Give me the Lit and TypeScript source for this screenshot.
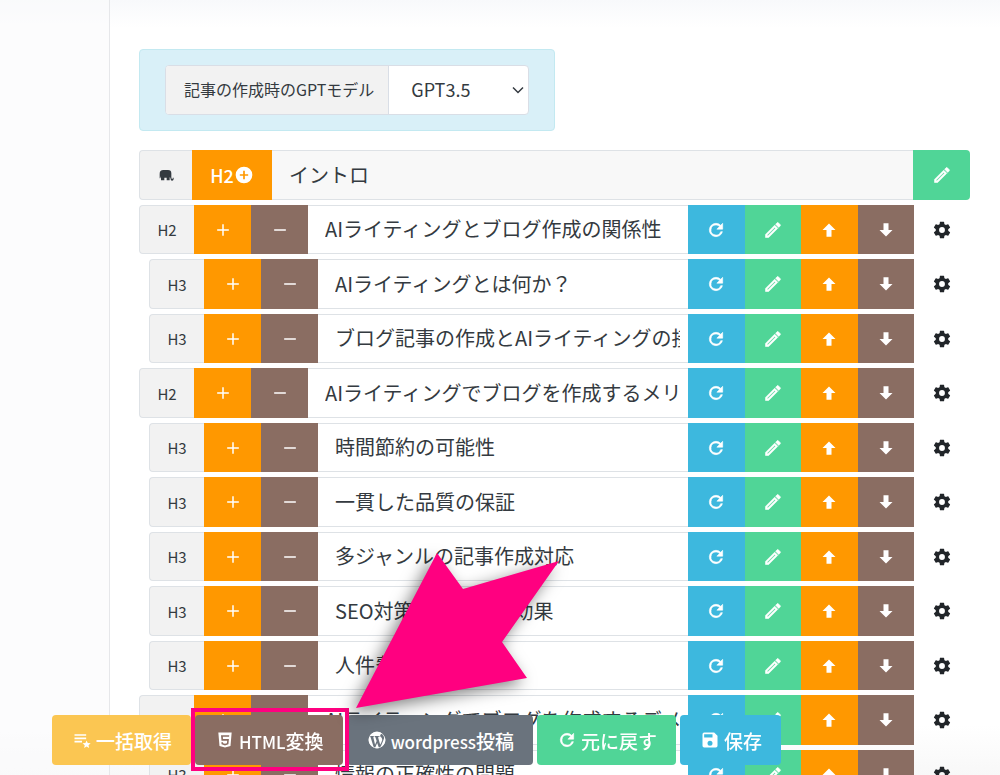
import { LitElement, html, css, svg, nothing } from "lit";
import { customElement, property } from "lit/decorators.js";

const icons: Record<string, unknown> = {
  elephant: svg`<path d="M19 19 Q19 15.5 17.5 15.5 L17.5 20 H13 V16 H9.5 V20 H4.5 V14 L3.5 17 H2.5 V10 Q2.5 4.5 8 4.5 H15 Q20 4.5 20 9.5 V15 Q20 18 21.2 18 Q22.2 18 22.2 16 H23.5 Q23.8 20.5 21 20.5 Q19 20.5 19 18 Z" />`,
  plus: svg`<path d="M19 12.9H12.9V19H11.1V12.9H5V11.1H11.1V5H12.9V11.1H19Z" />`,
  minus: svg`<path d="M5 11.1H19V12.9H5Z" />`,
  plusCircle: svg`<path fill-rule="evenodd" d="M12 2a10 10 0 1 0 0 20a10 10 0 1 0 0-20ZM17 13H13V17H11V13H7V11H11V7H13V11H17Z" />`,
  pencil: svg`<path stroke="currentColor" stroke-width="0.7" d="M14.06 9.02l.92.92L5.92 19H5v-.92l9.06-9.06M17.66 3c-.25 0-.51.1-.7.29l-1.83 1.83 3.75 3.75 1.83-1.83c.39-.39.39-1.04 0-1.41l-2.34-2.34c-.2-.2-.45-.29-.71-.29M14.06 6.19L3 17.25V21h3.75L17.81 9.94l-3.75-3.75z" />`,
  refresh: svg`<path stroke="currentColor" stroke-width="0.7" d="M17.65 6.35A7.95 7.95 0 0 0 12 4a8 8 0 1 0 7.73 10h-2.08A6 6 0 1 1 12 6c1.66 0 3.14.69 4.22 1.78L13 11h7V4z" />`,
  up: svg`<path d="M15 20H9V12H4.2L12 4.2 19.8 12H15Z" />`,
  down: svg`<path d="M9 4H15V12H19.8L12 19.8 4.2 12H9Z" />`,
  gear: svg`<path d="M12 15.5A3.5 3.5 0 0 1 8.5 12 3.5 3.5 0 0 1 12 8.5a3.5 3.5 0 0 1 3.5 3.5 3.5 3.5 0 0 1-3.5 3.5m7.43-2.53c.04-.32.07-.64.07-.97s-.03-.66-.07-1l2.11-1.63c.19-.15.24-.42.12-.64l-2-3.46c-.12-.22-.39-.31-.61-.22l-2.49 1c-.52-.39-1.06-.73-1.69-.98l-.37-2.65A.506.506 0 0 0 14 2h-4c-.25 0-.46.18-.5.42l-.37 2.65c-.63.25-1.17.59-1.69.98l-2.49-1c-.22-.09-.49 0-.61.22l-2 3.46c-.13.22-.07.49.12.64L4.57 11c-.04.34-.07.67-.07 1s.03.65.07.97l-2.11 1.66c-.19.15-.25.42-.12.64l2 3.46c.12.22.39.3.61.22l2.49-1.01c.52.4 1.06.74 1.69.99l.37 2.65c.04.24.25.42.5.42h4c.25 0 .46-.18.5-.42l.37-2.65c.63-.26 1.17-.59 1.69-.99l2.49 1.01c.22.08.49 0 .61-.22l2-3.46c.12-.22.07-.49-.12-.64z" />`,
  listStar: svg`<path d="M3 5H17V7H3ZM3 9H17V11H3ZM3 13H12V15H3ZM17.5 12.5l1.4 3.2 3.5.3-2.6 2.3.8 3.4-3.1-1.8-3 1.8.8-3.4-2.7-2.3 3.5-.3Z" />`,
  html5: svg`<path fill-rule="evenodd" d="M4 3H20L18.6 19.2 12 21 5.4 19.2ZM7.2 6.2L7.8 12.8H14.6L14.3 15.8 12 16.5 9.7 15.8 9.6 14.6H7.6L7.9 17.2 12 18.6 16.1 17.2 16.7 10.9H9.6L9.4 8.2H16.9L17.1 6.2Z" />`,
  save: svg`<path fill-rule="evenodd" d="M17 3H5a2 2 0 0 0-2 2v14a2 2 0 0 0 2 2h14a2 2 0 0 0 2-2V7ZM12 19a3 3 0 1 1 0-6a3 3 0 0 1 0 6ZM15 9H5V5h10Z" />`,
  wordpress: svg`<path d="M12.2 15.5L9.65 21.72C10.4 21.9 11.19 22 12 22 12.84 22 13.66 21.9 14.44 21.7L12.2 15.5M20.61 7.06C20.8 7.96 20.76 9.05 20.39 10.25 19.42 13.37 17 19 16.1 21.13 19.58 19.58 22 16.12 22 12.1 22 10.26 21.5 8.53 20.61 7.06M4.31 8.64C4.31 8.64 3.82 8 3.31 8H2.78C2.28 9.13 2 10.62 2 12 2 16.09 4.5 19.61 8.12 21.11L4.31 8.64M3.13 7.14C4.8 4.03 8.14 2 12 2 14.5 2 16.78 3.06 18.53 4.56 18.03 4.46 17.5 4.57 16.93 4.89 15.64 5.63 15.22 7.71 16.89 8.76 17.94 9.41 18.31 11.04 18.27 12.04 18.24 13.03 15.85 17.61 15.85 17.61L13.5 9.63C13.5 9.63 13.44 9.07 13.44 8.91 13.44 8.71 13.5 8.46 13.63 8.31 13.72 8.22 13.85 8 14 8H15.11V7.14H9.11V8H9.3C9.5 8 9.69 8.29 9.87 8.47 10.09 8.7 10.37 9.55 10.7 10.43L11.57 13.3 9.69 17.63 7.63 8.97C7.63 8.97 7.69 8.37 7.82 8.27 7.9 8.2 8 8 8.17 8H8.22V7.14H3.13Z" /><circle cx="12" cy="12" r="9.6" fill="none" stroke="currentColor" stroke-width="0.8" />`,
};

const icon = (name: string, size = 20, cls = "") => html`
  <svg class=${cls} viewBox="0 0 24 24" width=${size} height=${size} fill="currentColor" aria-hidden="true">${icons[name]}</svg>
`;

const shared = css`
  * {
    box-sizing: border-box;
  }
  button,
  input,
  select {
    font: inherit;
    color: inherit;
    margin: 0;
    border: 0;
    border-radius: 0;
    padding: 0;
    outline: 0;
  }
  button {
    display: flex;
    align-items: center;
    justify-content: center;
    cursor: pointer;
    color: #fff;
  }
  svg {
    display: block;
    flex: none;
  }
  .orange {
    background: #ff9800;
  }
  .brown {
    background: #8a6d62;
  }
  .blue {
    background: #3db8de;
  }
  .green {
    background: #50d597;
  }
  .yellow {
    background: #fbc652;
  }
  .grey {
    background: #6a737d;
  }
`;

@customElement("heading-row")
class HeadingRow extends LitElement {
  @property() level = "H2";
  @property() text = "";

  static styles = [
    shared,
    css`
      :host {
        display: block;
      }
      .row {
        display: flex;
        height: 100%;
      }
      .h3 {
        padding-left: 10px;
      }
      .tag {
        width: 55px;
        display: flex;
        align-items: center;
        justify-content: center;
        font-size: 15px;
        background: #f2f2f2;
        border: 1px solid #dee2e6;
        border-right: 0;
        border-radius: 4px 0 0 4px;
      }
      .action {
        width: 57px;
      }
      .title {
        flex: 1;
        min-width: 0;
        background: #fff;
        border: solid #dee2e6;
        border-width: 1px 0;
        padding: 0 8px 2px 17px;
        font-size: 20px;
      }
      .tools {
        display: grid;
        grid-template-columns: 1fr 1fr 1fr 1fr;
        width: 226px;
      }
      .gear {
        width: 56px;
        background: none;
        color: #212529;
      }
    `,
  ];

  render() {
    return html`
      <div class="row ${this.level.toLowerCase()}">
        <label class="tag" for="title">${this.level}</label>
        <button class="action orange" aria-label="追加">${icon("plus")}</button>
        <button class="action brown" aria-label="削除">${icon("minus")}</button>
        <input id="title" class="title" .value=${this.text} />
        <div class="tools">
          <button class="blue" aria-label="再生成">${icon("refresh")}</button>
          <button class="green" aria-label="編集">${icon("pencil")}</button>
          <button class="orange" aria-label="上へ">${icon("up")}</button>
          <button class="brown" aria-label="下へ">${icon("down")}</button>
        </div>
        <button class="gear" aria-label="設定">${icon("gear")}</button>
      </div>
    `;
  }
}

const rows = [
  ["H2", "AIライティングとブログ作成の関係性"],
  ["H3", "AIライティングとは何か？"],
  ["H3", "ブログ記事の作成とAIライティングの接点"],
  ["H2", "AIライティングでブログを作成するメリット"],
  ["H3", "時間節約の可能性"],
  ["H3", "一貫した品質の保証"],
  ["H3", "多ジャンルの記事作成対応"],
  ["H3", "SEO対策に貢献する効果"],
  ["H3", "人件費の削減"],
  ["H2", "AIライティングでブログを作成するデメリット"],
  ["H3", "情報の正確性の問題"],
];

const actions = [
  { latin: "", label: "一括取得", icon: "listStar", tone: "yellow" },
  { latin: "HTML", label: "変換", icon: "html5", tone: "brown", marked: true },
  { latin: "wordpress", label: "投稿", icon: "wordpress", tone: "grey" },
  { latin: "", label: "元に戻す", icon: "refresh", tone: "green" },
  { latin: "", label: "保存", icon: "save", tone: "blue" },
];

@customElement("app-root")
class AppRoot extends LitElement {
  static styles = [
    shared,
    css`
      :host {
        display: grid;
        grid-template-columns: 110px 1fr;
        height: 100vh;
        overflow: hidden;
        font-family: "Noto Sans CJK JP", sans-serif;
        color: #343a40;
        background: linear-gradient(#f8f9fb, #fff 28px, #fff calc(100% - 50px), #f8f8f8);
      }
      .side {
        border-right: 1px solid #e6e7ea;
        background: rgb(250 250 251 / 60%);
      }
      .main {
        min-width: 0;
        padding: 49px 30px 0 29px;
      }
      .panel {
        width: 416px;
        padding: 15px 25px;
        background: #d9f0f8;
        border: 1px solid #c3e9f1;
        border-radius: 4px;
      }
      .model {
        display: flex;
        height: 50px;
        border: 1px solid #d9dee6;
        border-radius: 4px;
        background: #fff;
        overflow: hidden;
      }
      .model-label {
        display: flex;
        align-items: center;
        padding: 0 14px 2px 18px;
        font-size: 16px;
        background: #f2f2f2;
        border-right: 1px solid #d9dee6;
        white-space: nowrap;
      }
      .select-wrap {
        flex: 1;
        display: grid;
        align-items: center;
      }
      .select-wrap > * {
        grid-area: 1 / 1;
      }
      .select {
        appearance: none;
        height: 100%;
        padding: 0 30px 2px 22px;
        font-size: 18px;
        background: none;
      }
      .chevron {
        justify-self: end;
        margin-right: 4px;
        pointer-events: none;
      }
      .intro {
        display: flex;
        height: 50px;
        margin: 19px 0 5px;
      }
      .lead {
        width: 53px;
        display: flex;
        align-items: center;
        justify-content: center;
        background: #f2f2f2;
        border: 1px solid #dee2e6;
        border-right: 0;
        border-radius: 4px 0 0 4px;
      }
      .add {
        width: 80px;
        font-size: 18px;
        font-weight: 500;
      }
      .intro-title {
        flex: 1;
        min-width: 0;
        padding: 0 17px 2px;
        font-size: 20px;
        background: #f8f8f8;
        border: solid #dee2e6;
        border-width: 1px 0;
      }
      .edit {
        width: 57px;
        border-radius: 0 4px 4px 0;
      }
      .list {
        display: flex;
        flex-direction: column;
        gap: 5px;
      }
      .item {
        flex: none;
        height: 50px;
      }
      .item:nth-child(odd) {
        height: 49px;
      }
      .bar {
        position: fixed;
        left: 52px;
        bottom: 10px;
        display: flex;
        gap: 4px;
      }
      .cta {
        position: relative;
        height: 50px;
        padding: 0 19px 0 20px;
        gap: 4px;
        border-radius: 4px;
        font-size: 19px;
        font-weight: 500;
        white-space: nowrap;
      }
      .latin {
        font-size: 17px;
      }
      .frame {
        position: absolute;
        inset: -7px -6px -6px -4px;
        border: 4px solid #ff0080;
        pointer-events: none;
      }
      .marked {
        z-index: 1;
      }
      .arrow {
        position: fixed;
        left: 356px;
        bottom: 67px;
        overflow: visible;
        filter: drop-shadow(-5px 5px 8px rgb(0 0 0 / 50%));
        pointer-events: none;
      }
    `,
  ];

  render() {
    return html`
      <aside class="side"></aside>
      <main class="main">
        <section class="panel">
          <div class="model">
            <label class="model-label" for="model">記事の作成時のGPTモデル</label>
            <div class="select-wrap">
              <select id="model" class="select">
                <option>GPT3.5</option>
              </select>
              <svg class="chevron" width="12" height="8" viewBox="0 0 12 8" fill="none" stroke="#343a40" stroke-width="1.5" aria-hidden="true">
                <path d="M1 1.5L6 6.5L11 1.5" />
              </svg>
            </div>
          </div>
        </section>
        <section class="intro">
          <label class="lead" for="intro" aria-label="イントロ">${icon("elephant", 16)}</label>
          <button class="add orange"><span>H2</span>${icon("plusCircle")}</button>
          <input id="intro" class="intro-title" readonly .value=${"イントロ"} />
          <button class="edit green" aria-label="編集">${icon("pencil")}</button>
        </section>
        <section class="list">
          ${rows.map(([level, text]) => html`<heading-row class="item" level=${level} text=${text}></heading-row>`)}
        </section>
      </main>
      <nav class="bar">
        ${actions.map(
          (a) => html`<button class="cta ${a.tone} ${a.marked ? "marked" : ""}">
            ${icon(a.icon)}<span>${a.latin ? html`<span class="latin">${a.latin}</span>` : nothing}${a.label}</span>${a.marked ? html`<span class="frame"></span>` : nothing}
          </button>`
        )}
      </nav>
      <svg class="arrow" width="203" height="155" viewBox="0 0 203 155" aria-hidden="true">
        <path fill="#ff0080" d="M0 155L81 0L107 36L203 8L146 89L171 125Z" />
      </svg>
    `;
  }
}
